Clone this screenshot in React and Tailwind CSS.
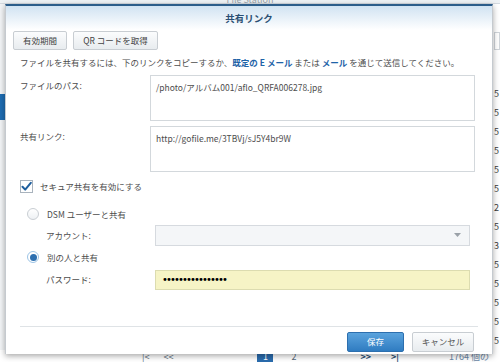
import React from 'react';

const rightNums = ['5', '5', '5', '5', '5', '5', '2', '5', '3', '5', '5', '5', '5', '5'];

function CheckMark() {
  return (
    <svg width="11" height="11" viewBox="0 0 11 11">
      <path d="M1.5 5.8 L4.2 8.6 L9.8 1.8" fill="none" stroke="#1f5f9e" strokeWidth="2" strokeLinecap="round" strokeLinejoin="round" />
    </svg>
  );
}

function Radio({ checked }) {
  return (
    <div
      className={`w-[12px] h-[12px] rounded-full border flex items-center justify-center ${
        checked ? 'border-[#9cc4e6] bg-white' : 'border-[#c9ced3] bg-gradient-to-b from-white to-[#eef1f4]'
      }`}
    >
      {checked && <div className="w-[7px] h-[7px] rounded-full bg-[#2c6fb0]" />}
    </div>
  );
}

export default function App() {
  return (
    <div className="relative w-[500px] h-[362px] overflow-hidden bg-white text-[#4d4d4d] font-['Noto_Sans_CJK_JP',sans-serif]">
      {/* File Station window behind the dialog */}
      <div className="flex flex-col h-full">
        <div className="h-[5px] bg-[#eef2f5] border-b border-[#d4dae0] flex justify-center overflow-hidden">
          <span className="text-[9px] leading-[9px] -mt-[5px] text-[#9aa3ab]">File Station</span>
        </div>
        <div className="flex flex-1">
          <div className="w-[5px] bg-[#f3f5f7] flex flex-col pt-[90px]">
            <div className="h-[26px] bg-[#1e6cb2]" />
          </div>
          <div className="flex-1" />
          <div className="w-[12px] flex flex-col pt-[28px] pl-[6px]">
            <div className="h-[18px] border border-[#d0d5da] mb-[34px] bg-white" />
            {rightNums.map((n, i) => (
              <div key={i} className="h-[19px] leading-[19px] text-[9px] text-[#3a3a3a]">
                {n}
              </div>
            ))}
          </div>
        </div>
        <div className="h-[12px] flex items-start pt-[2px] text-[9px] leading-[10px] text-[#5a6b7c]">
          <span className="ml-[142px]">|&lt;</span>
          <span className="ml-[14px]">&lt;&lt;</span>
          <span className="ml-[84px] w-[16px] h-[10px] bg-[#2a6cae] text-white text-center">1</span>
          <span className="ml-[18px]">2</span>
          <span className="ml-[64px] font-bold text-[#2a4f73]">&gt;&gt;</span>
          <span className="ml-[20px] font-bold text-[#2a4f73]">&gt;|</span>
          <span className="ml-[50px] text-[#6b88a8]">1764 個の</span>
        </div>
      </div>

      {/* Share link dialog */}
      <div className="absolute left-[5px] top-[4px] w-[488px] h-[350px] bg-white border-t-2 border-[#2c5d8a] border-x border-x-[#c5cacf] shadow-[0_2px_6px_rgba(0,0,0,0.35)] flex flex-col text-[8.5px]">
        <div className="h-[24px] bg-gradient-to-b from-[#d1e3f2] to-white flex items-center justify-center">
          <span className="text-[9.5px] font-bold text-[#2a4f73]">共有リンク</span>
        </div>

        <div className="mt-[1px] pl-[7px] flex gap-[6px]">
          <button className="w-[54px] h-[19px] border border-[#c8cdd2] rounded-[2px] bg-gradient-to-b from-[#fbfcfd] to-[#e8ecef] text-[#444]">
            有効期間
          </button>
          <button className="w-[85px] h-[19px] border border-[#c8cdd2] rounded-[2px] bg-gradient-to-b from-[#fbfcfd] to-[#e8ecef] text-[#444]">
            QR コードを取得
          </button>
        </div>

        <p className="mt-[6px] pl-[14px] leading-[12px] whitespace-nowrap">
          ファイルを共有するには、下のリンクをコピーするか、
          <span className="text-[#1f64a8] font-bold">既定の E メール</span> または{' '}
          <span className="text-[#1f64a8] font-bold">メール</span> を通じて送信してください。
        </p>

        <div className="mt-[7px] flex">
          <div className="w-[144px] pl-[14px] pt-[4px]">ファイルのパス:</div>
          <div className="w-[325px] h-[46px] border border-[#d3d8dc] px-[5px] pt-[5px]">
            /photo/アルバム001/aflo_QRFA006278.jpg
          </div>
        </div>

        <div className="mt-[5px] flex">
          <div className="w-[144px] pl-[14px] pt-[4px]">共有リンク:</div>
          <div className="w-[325px] h-[46px] border border-[#d3d8dc] px-[5px] pt-[5px]">
            http://gofile.me/3TBVj/sJ5Y4br9W
          </div>
        </div>

        <div className="mt-[8px] pl-[14px] flex items-center gap-[7px]">
          <div className="w-[13px] h-[13px] border border-[#a9b3bd] bg-white flex items-center justify-center">
            <CheckMark />
          </div>
          <span>セキュア共有を有効にする</span>
        </div>

        <div className="mt-[15px] pl-[21px] flex items-center gap-[8px]">
          <Radio />
          <span>DSM ユーザーと共有</span>
        </div>

        <div className="mt-[4px] flex items-center">
          <div className="w-[149px] pl-[40px]">アカウント:</div>
          <div className="w-[315px] h-[21px] border border-[#d6dadf] bg-[#f4f6f8] flex items-center justify-end pr-[8px]">
            <svg width="7" height="4" viewBox="0 0 7 4">
              <path d="M0 0 H7 L3.5 4 Z" fill="#9aa1a8" />
            </svg>
          </div>
        </div>

        <div className="mt-[5px] pl-[21px] flex items-center gap-[8px]">
          <Radio checked />
          <span>別の人と共有</span>
        </div>

        <div className="mt-[6px] flex items-center">
          <div className="w-[149px] pl-[40px]">パスワード:</div>
          <div className="w-[315px] h-[20px] border border-[#dcdcb0] bg-[#f6f4c6] flex items-center pl-[6px] text-[10px] text-black tracking-[-1.9px] font-['DejaVu_Sans',sans-serif]">
            ••••••••••••••••
          </div>
        </div>

        <div className="mt-[36px] mx-[14px] border-t border-[#dfe3e6]" />

        <div className="mt-[5px] pr-[18px] flex justify-end gap-[8px]">
          <button className="w-[57px] h-[20px] rounded-[2px] border border-[#2d6fae] bg-gradient-to-b from-[#5aa3dd] to-[#2f7cc1] text-white">
            保存
          </button>
          <button className="w-[62px] h-[20px] rounded-[2px] border border-[#c8cdd2] bg-gradient-to-b from-[#fbfcfd] to-[#e8ecef] text-[#555]">
            キャンセル
          </button>
        </div>
      </div>
    </div>
  );
}
